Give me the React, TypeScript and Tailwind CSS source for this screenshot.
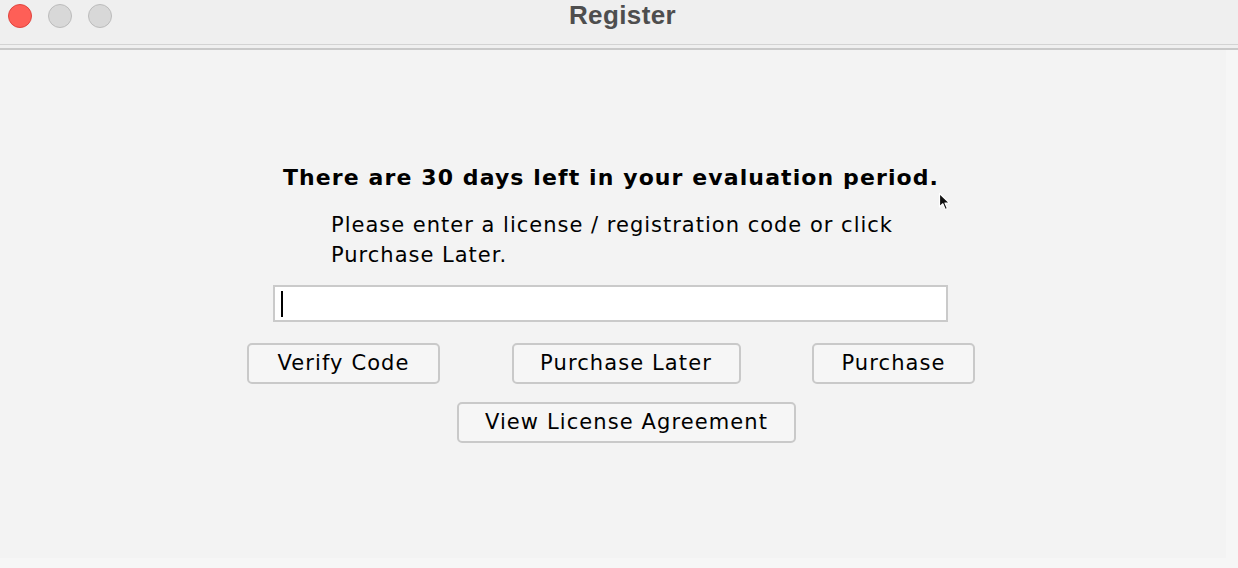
const Btn = ({ label, w }: { label: string; w: string }) => (
  <button
    className={`${w} h-[41px] rounded-[5px] border-2 border-[#c9c9c9] bg-[#f6f6f6] text-[21px] tracking-[1.1px] text-black leading-none`}
  >
    {label}
  </button>
)

const App = () => {
  return (
    <div
      className="w-[1238px] h-[568px] bg-[#f6f6f6] overflow-hidden relative"
      style={{ fontFamily: '"DejaVu Sans", "Liberation Sans", sans-serif' }}
    >
      {/* title bar */}
      <div className="h-[44px] bg-[#efefef] flex items-center relative">
        <div className="flex items-center gap-[16px] pl-[8px] pb-[12px]">
          <div className="w-[24px] h-[24px] rounded-full bg-[#fe5f57] border border-[#e0443e]" />
          <div className="w-[24px] h-[24px] rounded-full bg-[#d8d8d8] border border-[#bcbcbc]" />
          <div className="w-[24px] h-[24px] rounded-full bg-[#d8d8d8] border border-[#bcbcbc]" />
        </div>
        <div
          className="absolute left-0 right-0 top-0 h-[44px] flex items-center justify-center pb-[14px] text-[26px] tracking-[0.4px] font-bold text-[#4e4e4e]"
          style={{ fontFamily: '"Liberation Sans", Arial, sans-serif' }}
        >
          <span className="ml-[7px]">Register</span>
        </div>
      </div>
      <div className="h-[1px] bg-[#d3d3d3]" />
      <div className="h-[3px] bg-[#efefef]" />
      <div className="h-[2px] bg-[#c9c9c9]" />

      {/* body */}
      <div className="w-[1226px] h-[508px] bg-[#f3f3f3] pt-[113px]">
        <div className="ml-[247px] w-[728px]">
          <div className="text-center text-[22px] tracking-[1.1px] font-bold text-black leading-[30px]">
            There are 30 days left in your evaluation period.
          </div>
          <div className="mt-[17px] ml-[84px] w-[610px] text-[21px] tracking-[1px] text-black leading-[30px]">
            Please enter a license / registration code or click Purchase Later.
          </div>
          <div className="mt-[15px] ml-[26px] w-[675px] h-[37px] border-2 border-[#cacaca] bg-white flex items-center pl-[6px]">
            <div className="w-[2px] h-[26px] bg-black" />
          </div>
          <div className="mt-[21px] flex justify-between">
            <Btn label="Verify Code" w="w-[193px]" />
            <Btn label="Purchase Later" w="w-[229px]" />
            <Btn label="Purchase" w="w-[163px]" />
          </div>
          <div className="mt-[18px] ml-[210px]">
            <Btn label="View License Agreement" w="w-[339px]" />
          </div>
        </div>
      </div>

      {/* mouse pointer */}
      <svg className="absolute left-[938px] top-[192px]" width="14" height="20" viewBox="0 0 14 20">
        <path d="M1.5 1.5 L1.5 15 L4.8 11.8 L7.2 17.5 L9.4 16.5 L7 11 L11.5 11 Z" fill="#111" stroke="#fff" strokeWidth="1.2" strokeLinejoin="round" />
      </svg>
    </div>
  )
}

export default App
